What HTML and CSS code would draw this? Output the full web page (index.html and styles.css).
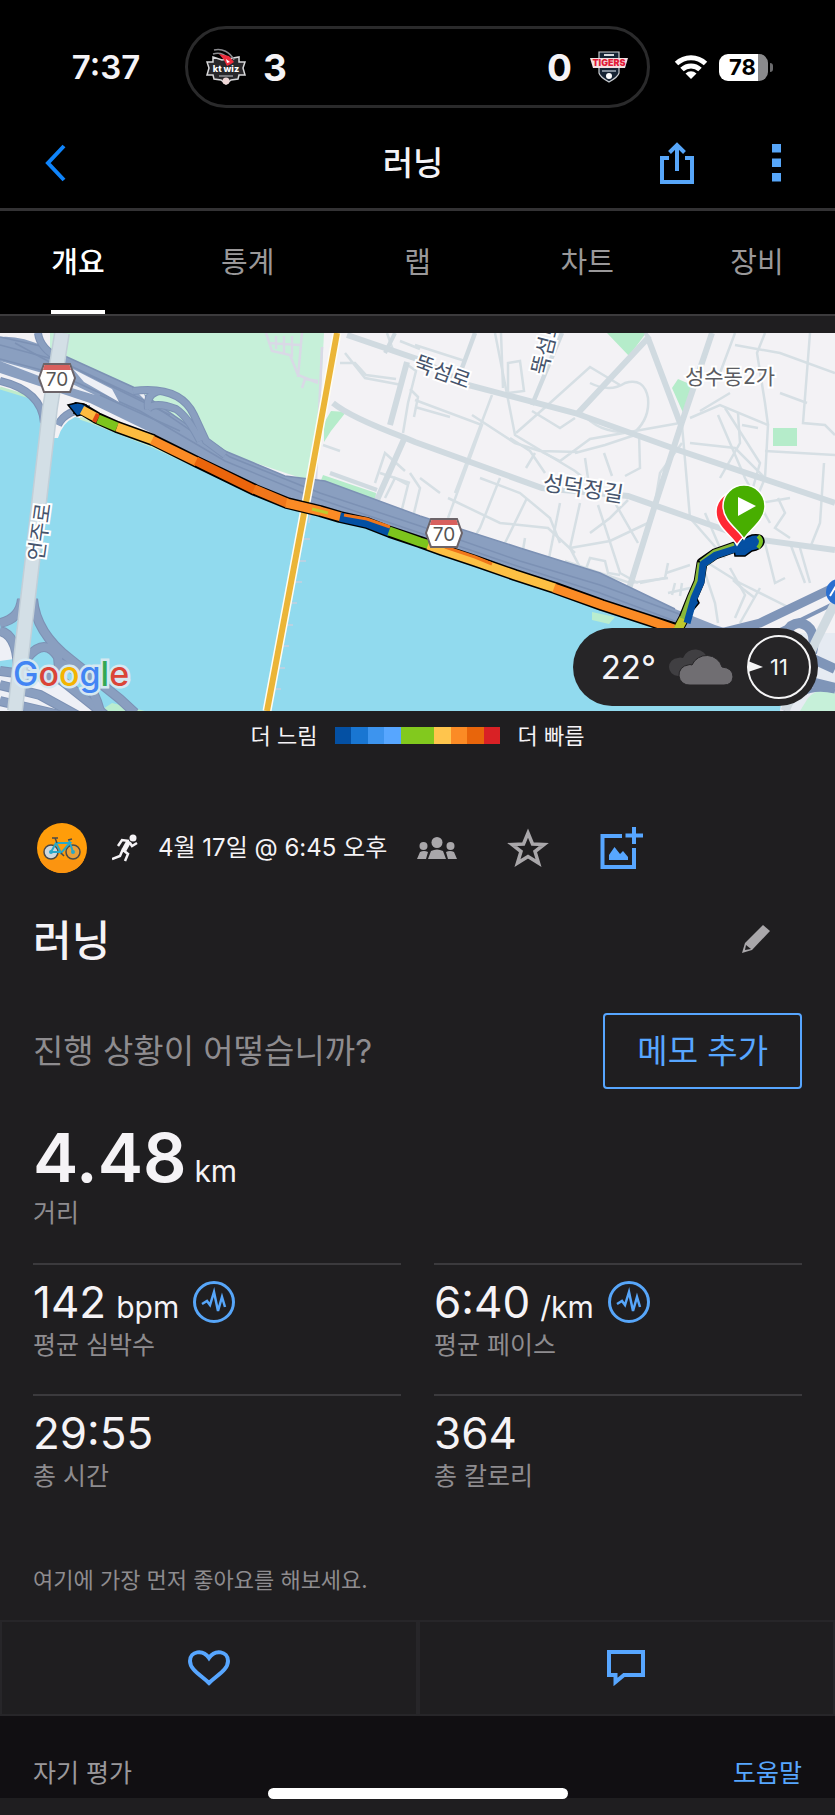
FILE: index.html
```
<!DOCTYPE html>
<html lang="ko">
<head>
  <meta charset="UTF-8">
  <meta name="viewport" content="width=device-width, initial-scale=1.0">
  <title>러닝</title>
  <link rel="stylesheet" href="styles.css">
</head>
<body>
  <header class="top">
    <div class="status">
      <span class="time">7:37</span>
      <div class="island">
        <svg class="team" viewBox="0 0 40 38" aria-hidden="true">
          <path d="M7 9 L16 12 L33 9 L33 14 L39 14 L37 20 L39 27 L33 27 L32 31 L25 32 L20 36 L15 32 L8 31 L7 27 L1 27 L3 20 L1 14 L7 14 Z" fill="#29282b" stroke="#d8d8da" stroke-width="1.5"/>
          <path d="M8 2 C16 0 24 4 28 12 M7 6 C13 4 18 6 22 10" fill="none" stroke="#8b8b8f" stroke-width="1.5"/>
          <path d="M13 6 L23 8 L28 14 L25 16 L21 18 L18 12 Z" fill="#ee2c3c"/>
          <path d="M20 11 l4 3 -3 1z" fill="#fff"/>
          <text x="20" y="24" text-anchor="middle" class="kt">kt wiz</text>
          <path d="M13 28 H27" stroke="#77777b" stroke-width="2"/>
          <circle cx="20" cy="33" r="3.5" fill="#f0d9d9"/>
        </svg>
        <strong>3</strong>
        <strong class="away">0</strong>
        <svg class="team" viewBox="0 0 40 38" aria-hidden="true">
          <path d="M10 4 H30 V25 Q29 29 20 34 Q11 29 10 25 Z" fill="#162434" stroke="#c9ccd0" stroke-width="1.2"/>
          <path d="M15 7 H25" stroke="#d8dbe0" stroke-width="2"/>
          <path d="M1 10 H39 L36 20 H4 Z" fill="#f3dfe2"/>
          <text x="20" y="18" text-anchor="middle" class="tigers">TIGERS</text>
          <path d="M13 23 H27" stroke="#7f8b98" stroke-width="2"/>
          <circle cx="20" cy="28" r="3" fill="#fff"/>
        </svg>
      </div>
      <div class="signals">
        <svg class="wifi" viewBox="0 0 34 26" aria-hidden="true">
          <g fill="none" stroke="#fff" stroke-width="5">
            <path d="M2.500 9.500 A21 21 0 0 1 31.500 9.500"/>
            <path d="M8 15.500 A13 13 0 0 1 26 15.500"/>
          </g>
          <path d="M17 25 L11.500 19.500 A8 8 0 0 1 22.500 19.500 Z" fill="#fff"/>
        </svg>
        <span class="battery">78</span>
      </div>
    </div>

    <div class="titlebar">
      <button class="icon-btn" aria-label="뒤로">
        <svg width="22" height="38" viewBox="0 0 22 38"><path d="M19 2 L3 19 L19 36" fill="none" stroke="#0f84fb" stroke-width="4"/></svg>
      </button>
      <h1>러닝</h1>
      <div class="title-actions">
        <button class="icon-btn" aria-label="공유">
          <svg width="34" height="42" viewBox="0 0 34 42"><path d="M9 16 H2 V40 H32 V16 H25 M17 29 V4 M9.500 10.500 L17 3 L24.500 10.500" fill="none" stroke="#57a6f9" stroke-width="4"/></svg>
        </button>
        <button class="icon-btn" aria-label="더보기">
          <svg width="9" height="38" viewBox="0 0 9 38"><path d="M0 0h9v8.500H0z M0 14.500h9V23H0z M0 29h9v8.500H0z" fill="#57a6f9"/></svg>
        </button>
      </div>
    </div>

    <nav class="tabs">
      <a href="#" class="active">개요</a>
      <a href="#">통계</a>
      <a href="#">랩</a>
      <a href="#">차트</a>
      <a href="#">장비</a>
    </nav>
  </header>

  <main>
    <section class="map">
      <svg class="map-canvas" viewBox="0 0 835 378" role="img" aria-label="러닝 경로 지도">
        <rect width="835" height="378" fill="#f3f2f5"/>

        <!-- parks -->
        <g fill="#b5ecca">
          <path d="M50 0 H324 Q320 80 316 150 L225 120 L50 40 Z" fill="#c6f0d9"/>
          <path d="M331 78 L346 79 L331 98 L324 109 V90 Z M323 142 L376 160 L375 171 L320 150 Z"/>
          <path d="M607 0 H646 L629 23 Z M678 46 L692 52 L684 82 L672 55 Z M773 95 H797 V113 H773 Z"/>
        </g>

        <!-- residential streets -->
        <g fill="none" stroke="#d6dfe4" stroke-width="2.500">
          <path d="M415 67 L482 92 L448 185 M492 62 L455 160 M495 0 L515 102 L575 138 L590 150"/>
          <path d="M415 12 L465 28 M387 0 L394 20 M400 8 L420 16 M345 20 L365 45 L402 52 M340 30 L355 30 L366 42 L396 46"/>
          <path d="M405 30 L416 38 L408 70 L403 100 M410 56 L418 64 L414 84 M323 112 L340 118 M375 150 L385 120 L405 138 M380 140 L410 150"/>
          <path d="M385 165 L395 145 L408 152 L402 176 M410 140 L420 155 L414 180 M420 145 L440 160"/>
          <path d="M415 74 L450 84 M472 82 L515 110 L540 118 L578 119 M540 118 L560 128 L590 106 L635 98 L680 90"/>
          <path d="M501 0 L503 55 M508 30 L520 28 L524 58 L508 60 Z M516 100 L550 70 L590 34 L620 52"/>
          <path d="M532 78 L560 95 L575 85 M582 80 Q600 102 635 99 Q650 85 648 65 Q644 44 625 50 Q610 60 590 50"/>
          <path d="M639 100 L640 135 L625 143 M575 120 L605 112 L635 102 M604 120 L612 143 M585 125 L588 145"/>
          <path d="M510 105 L530 118 L545 140 M526 135 L535 120 M480 145 L520 160 L550 185 L560 210"/>
          <path d="M448 165 L500 190 L548 195 L575 220 M500 145 L480 195 L462 225 M527 165 L505 210 L490 235"/>
          <path d="M560 170 L548 230 M580 170 L570 215 L583 240 M598 172 L620 240 L638 250 M615 170 L638 210"/>
          <path d="M628 167 L610 185 L590 200 M570 215 L610 208 L648 190 M525 205 L520 235 M565 228 L600 240 L630 250 L668 245"/>
          <path d="M586 236 L590 225 L605 228 L608 240 L620 242 M666 240 L690 232 M668 260 L690 255"/>
          <path d="M682 92 L690 185 L725 225 M690 110 L735 115 L765 145 M690 85 L720 72 L768 92 L765 145 L742 200"/>
          <path d="M718 82 L745 145 L770 190 M725 75 L760 130 L750 165 M765 0 L757 20 L765 70 L768 92 M700 78 L730 60"/>
          <path d="M742 92 L758 95 M738 80 L740 110 L720 145 M810 0 L803 90 L825 92 L835 102 M735 12 L780 20 L835 40"/>
          <path d="M735 0 L720 40 M780 60 L807 70 M765 118 L835 122 M760 170 L790 165 M778 165 L785 180 L775 195 L790 205"/>
          <path d="M824 130 L820 190 L810 215 M765 210 L775 250 L785 245 M800 215 L810 250 M790 210 L805 250"/>
          <path d="M705 180 L720 215 M700 225 L740 250 L790 275 M705 240 L715 270 L718 290 M730 235 L745 262 L735 285 M760 255 L740 290"/>
          <path d="M675 250 L672 262 M682 250 L680 263 M733 247 L743 256 L755 265 M655 170 L660 140 L682 110 M640 250 L665 245 L668 230"/>
        </g>
        <g fill="none" stroke="#d9d9e6" stroke-width="2.500">
          <path d="M266 0 L272 18 L290 22 L298 42 L318 50 M302 0 L298 44 M276 3 V16 M284 3 V20 M292 3 V24 M268 10 L300 12 M318 48 L305 46 L302 55"/>
          <path d="M322 14 L316 146 L322 150"/>
        </g>

        <!-- main streets -->
        <g fill="none" stroke="#d0dae0" stroke-width="6">
          <path d="M347 2 L420 27 L468 52 L575 80 L678 117 L835 170"/>
          <path d="M333 70 Q350 84 403 104 L415 109 L542 155 L628 163 L688 184 L748 205 L835 217"/>
          <path d="M712 0 L682 89 L655 172 L628 259"/>
          <path d="M648 5 L578 80 M648 5 L680 90 M405 104 L377 167 M390 92 L407 29"/>
          <path d="M475 0 L462 35 M562 0 L532 72 M330 140 L377 157" stroke-width="4.500"/>
          <path d="M395 0 L385 20 M645 0 L650 6" stroke-width="4"/>
        </g>

        <!-- river -->
        <path d="M0 55 L30 64 Q44 80 45 105 L58 105 Q62 90 75 84 L92 88 L150 111 L200 134 L262 163 L320 182 L372 195 L415 210 L520 248 L600 276 L680 302 L790 345 L785 378 H0 Z" fill="#91daee"/>
        <path d="M592 279 L615 284 L609 291 L592 287 Z" fill="#b9edcf"/>
        <path d="M0 55 L30 64 Q40 74 42 84" fill="none" stroke="#bfeccb" stroke-width="3"/>

        <!-- riverside expressway -->
        <path d="M0 4 Q20 2 45 14 L133 54 L225 118 L285 143 L325 148 L420 183 L520 215 L600 240 L675 276 L715 292 L770 310 L700 306 L620 276 L500 232 L400 197 L310 174 L250 152 L160 104 L90 70 L0 40 Z" fill="#8a9fc0"/>
        <g fill="none" stroke="#7c91b4" stroke-width="1.500">
          <path d="M0 12 L60 28 L150 70 L230 124 L320 160 L420 193 L520 228 L600 252 L690 285"/>
          <path d="M0 26 L60 42 L140 78 L225 128 L310 163 L420 200 L520 234 L600 260 L680 290"/>
          <path d="M0 4 L45 14 L133 54 L225 118 L285 143 L325 148 L420 183 L520 215 L600 240 L675 276"/>
          <path d="M15 10 L55 32 M80 38 L170 82 M100 62 L180 98"/>
        </g>
        <path d="M73 36 L112 56 L119 69 L84 49 Z M139 61 L144 60 L146 68 Z M0 28 L60 45 L95 62 L65 53 Z" fill="#eef0f6"/>
        <g fill="none" stroke="#7c91b4" stroke-width="8">
          <path d="M38 0 Q40 16 60 26 M133 58 Q180 52 194 82 L206 108 L225 122 M148 76 Q155 68 176 76 Q188 84 200 108 M0 48 Q42 58 44 90"/>
          <path d="M148 76 Q146 60 160 58 M58 92 Q66 76 90 76"/>
        </g>
        <g fill="none" stroke="#8a9fc0" stroke-width="6">
          <path d="M38 0 Q40 16 60 26 M133 58 Q180 52 194 82 L206 108 L225 122 M148 76 Q155 68 176 76 Q188 84 200 108 M0 48 Q42 58 44 90"/>
          <path d="M148 76 Q146 60 160 58 M58 92 Q66 76 90 76"/>
        </g>
        <path d="M80 85 L92 89 L150 112 L200 135" fill="none" stroke="#c6edce" stroke-width="3"/>

        <!-- south bank interchange -->
        <path d="M0 303 Q16 300 14 326 L0 328 Z M30 335 L55 350 L110 378 H0 V340 Z" fill="#eef0f6"/>
        <path d="M112 370 L145 378 H100 Z" fill="#b9edcf"/>
        <g fill="none" stroke="#7c91b4" stroke-width="10">
          <path d="M0 290 Q20 286 22 266 M33 266 Q36 300 70 326 L120 366 L135 380 M0 298 Q18 302 18 340 M0 352 L40 362 L80 384 M0 338 L60 346 L105 382 M28 324 Q45 304 58 324 L60 346"/>
          <path d="M60 330 Q90 340 100 378 M0 368 L60 382"/>
        </g>
        <g fill="none" stroke="#8a9fc0" stroke-width="8">
          <path d="M0 290 Q20 286 22 266 M33 266 Q36 300 70 326 L120 366 L135 380 M0 298 Q18 302 18 340 M0 352 L40 362 L80 384 M0 338 L60 346 L105 382 M28 324 Q45 304 58 324 L60 346"/>
          <path d="M60 330 Q90 340 100 378 M0 368 L60 382"/>
        </g>

        <!-- east interchange -->
        <path d="M790 300 H835 V378 H780 Z" fill="#e6ebf2"/>
        <path d="M808 365 Q820 352 835 360 V378 H800 Z" fill="#c6f0d9"/>
        <g fill="none" stroke="#7f95b8">
          <path d="M835 254 L760 290 L720 300" stroke-width="9"/>
          <path d="M835 270 L770 302" stroke-width="4"/>
          <path d="M790 320 Q780 292 800 290 Q818 294 812 320 M800 320 L835 336 M795 345 L835 355" stroke-width="10"/>
          <path d="M785 378 Q800 350 835 358" stroke-width="5"/>
        </g>
        <path d="M835 270 L815 310 L785 378" fill="none" stroke="#d0dae0" stroke-width="9"/>
        <circle cx="839" cy="259" r="13" fill="#2a6fd0"/>
        <path d="M830 263 L836 253" stroke="#fff" stroke-width="2"/>

        <!-- bridges -->
        <path d="M62 0 L50 75 L28 265 L15 378" fill="none" stroke="#c2cfd8" stroke-width="16"/>
        <path d="M62 0 L50 75 L28 265 L15 378" fill="none" stroke="#d3dfe6" stroke-width="13"/>
        <g stroke="#c5cfe0" stroke-width="1.500">
          <path d="M303 206h7 M299 228h7 M295 249h7 M291 270h6 M287 292h6 M283 313h6 M279 335h6 M275 356h6 M312 170 L309 190"/>
        </g>
        <path d="M337 0 L308 159 L267 378" fill="none" stroke="#fffdf2" stroke-width="9"/>
        <path d="M337 0 L308 159 L267 378" fill="none" stroke="#ebb537" stroke-width="6"/>

        <!-- track outline -->
        <g fill="none" stroke="#000" stroke-width="12" stroke-linejoin="round">
          <path d="M74 75 L82 76 L97 85 L117 94 L153 107 L197 129 L255 157 L287 170 L320 178 L340 184 L367 190 L390 199 L420 209 L442 217 L475 228 L515 242 L555 255 L602 272 L648 287 L676 296"/>
          <path d="M676 300 L684 285 L692 265 L699 249 L702 230 L715 221 L735 214 L758 209" stroke-width="11"/>
        </g>
        <path d="M68 72 L76 70 L86 72 L88 80 L77 83 Z" fill="#0450a3" stroke="#000" stroke-width="1.500"/>
        <path d="M733 210 L752 202 Q764 200 764 209 Q762 217 752 218 L745 223 L735 223 Z" fill="#0450a3" stroke="#000" stroke-width="1.500"/>
        <path d="M688 274 L697 266 L699 270 L694 276 Z" fill="#0450a3" stroke="#000" stroke-width="1.500"/>

        <!-- track coloured by pace -->
        <g fill="none" stroke-width="9" stroke-linejoin="round">
          <path d="M76 75 L82 76" stroke="#0450a3"/>
          <path d="M82 77 L97 85" stroke="#fdbb40"/>
          <path d="M94 84 L98 86" stroke="#e04a12"/>
          <path d="M98 86 L117 94" stroke="#7dc41d"/>
          <path d="M117 94 L153 107" stroke="#fdbb40"/>
          <path d="M152 107 L197 129" stroke="#fb8b25"/>
          <path d="M196 128 L255 157" stroke="#eb650c"/>
          <path d="M254 156 L287 170" stroke="#f0761a"/>
          <path d="M286 170 L320 178 L341 184" stroke="#fb8b25"/>
          <path d="M340 184 L367 190 L390 199" stroke="#0450a3"/>
          <path d="M389 198 L420 209 L430 212" stroke="#7dc41d"/>
          <path d="M428 212 L442 217 L475 228 L515 242 L555 255" stroke="#fdc043"/>
          <path d="M554 255 L602 272 L648 287 L674 296" stroke="#fb8b25"/>
          <path d="M676 300 L684 285" stroke="#bfc92c"/>
          <path d="M684 286 L692 265 L699 249 L702 230" stroke="#88b83a"/>
          <path d="M702 231 L715 221 L735 214" stroke="#88b83a"/>
          <path d="M687 290 L694 265 L701 249 L703 231 L716 222 L735 216 L754 210" stroke="#0450a3" stroke-width="7"/>
        </g>
        <g fill="none" stroke-width="3">
          <path d="M344 182 L367 186 L390 194 M445 214 L475 224 L492 231" stroke="#f0761a"/>
          <path d="M312 176 L328 180" stroke="#bfc92c"/>
          <path d="M758 203 Q764 208 758 215" stroke="#7dc41d" stroke-width="4"/>
        </g>

        <!-- start and finish pins -->
        <path d="M737 212 C731 202 716 194 716 179 A21 21 0 0 1 758 179 C758 194 743 202 737 212 Z" fill="#ff2834" stroke="#fff" stroke-width="1.500"/>
        <path d="M744 206 C738 196 723 188 723 173 A21 21 0 0 1 765 173 C765 188 750 196 744 206 Z" fill="#48ae00" stroke="#fff" stroke-width="1.500"/>
        <path d="M738 164 L756 173 L738 183 Z" fill="#fff"/>

        <!-- route shields -->
        <g stroke="#6c6469" stroke-width="2">
          <path d="M44 31 H70 L75 45 L70 59 H44 L39 45 Z M431 186 H457 L462 200 L457 214 H431 L426 200 Z" fill="#fff"/>
        </g>
        <path d="M44.500 32 H69.500 L71 37 H43 Z M431.500 187 H456.500 L458 192 H430 Z" fill="#d8605e"/>

        <g class="map-labels">
          <text x="57" y="53" class="shield">70</text>
          <text x="444" y="208" class="shield">70</text>
          <text transform="translate(440 46) rotate(20)">뚝섬로</text>
          <text transform="translate(553 15) rotate(-76)">뚝섬로</text>
          <text x="730" y="51" class="district">성수동2가</text>
          <text transform="translate(582 163) rotate(9)" class="street">성덕정길</text>
          <text transform="translate(47 200) rotate(-82)">언주로</text>
        </g>
        <text x="13" y="353" class="google"><tspan fill="#4285f4">G</tspan><tspan fill="#db4437">o</tspan><tspan fill="#f4b400">o</tspan><tspan fill="#4285f4">g</tspan><tspan fill="#34a853">l</tspan><tspan fill="#db4437">e</tspan></text>
      </svg>
      <div class="weather">
        <span class="temp">22°</span>
        <svg width="66" height="38" viewBox="0 0 66 38" aria-hidden="true">
          <path d="M10 28 A9 9 0 0 1 10 10 Q12 9 15 10 A13 13 0 0 1 40 12 L20 28 Z" fill="#403f42"/>
          <path d="M22 37 A10 10 0 0 1 20 17 Q22 16 24 17 A16 16 0 0 1 54 19 Q65 20 65 29 Q64 37 56 37 Z" fill="#706e72" stroke="#262527"/>
        </svg>
        <svg class="wind" width="66" height="66" viewBox="0 0 66 66" role="img" aria-label="바람 11">
          <circle cx="33" cy="33" r="31" fill="none" stroke="#f5f5f6" stroke-width="2"/>
          <path d="M2 27 L17 33 L2 38 Z" fill="#f5f5f6"/>
          <text x="33" y="41" text-anchor="middle">11</text>
        </svg>
      </div>
    </section>

    <div class="legend">
      <span>더 느림</span>
      <div class="scale">
        <i class="s1"></i><i class="s2"></i><i class="s3"></i><i class="s4"></i><i class="s5"></i>
        <i class="s5"></i><i class="s6"></i><i class="s7"></i><i class="s8"></i><i class="s9"></i>
      </div>
      <span>더 빠름</span>
    </div>

    <section class="activity">
      <div class="meta">
        <svg class="avatar" width="50" height="50" viewBox="0 0 50 50" aria-hidden="true">
          <circle cx="25" cy="25" r="25" fill="#ff9d0a"/>
          <path d="M3 37 A25 25 0 0 0 47 37 Z" fill="#fb9410"/>
          <circle cx="14" cy="29" r="7" fill="#cfd8dc" stroke="#4b4a48" stroke-width="1.500"/>
          <circle cx="36" cy="29" r="7" fill="#e9a13a" stroke="#4b4a48" stroke-width="1.500"/>
          <path d="M14 29 L19 20 H33 L24 30 L19 20 M32 17 L36 29 M14 29 H24" fill="none" stroke="#29a8c8" stroke-width="2"/>
          <path d="M15 15 H21 M18 15 L20 20 M31 17 L35 16 M24 30 L27 33" stroke="#4b4a48" stroke-width="1.500"/>
          <circle cx="14" cy="29" r="2" fill="#29a8c8"/><circle cx="36" cy="29" r="2" fill="#29a8c8"/>
        </svg>
        <svg class="runner" width="26" height="28" viewBox="0 0 26 28" aria-hidden="true">
          <circle cx="21" cy="4" r="3.500" fill="#f5f3f6"/>
          <path d="M17 7 L12 16" stroke="#f5f3f6" stroke-width="5"/>
          <path d="M17 7 L10 6 L6 12 M18 9 L20 12 L25 9 M11 16 L16 20 L13 27 M11 15 L8 22 L0 25" fill="none" stroke="#f5f3f6" stroke-width="2.500"/>
        </svg>
        <time>4월 17일 @ 6:45 오후</time>
        <svg class="people" width="40" height="22" viewBox="0 0 40 22" aria-hidden="true">
          <g fill="#a9a7aa"><circle cx="20" cy="5.500" r="5.500"/><circle cx="6.500" cy="9" r="4"/><circle cx="33.500" cy="9" r="4"/>
          <path d="M11 22 L14 14 Q20 11 26 14 L29 22 Z M0 22 L3 15 Q7 13 11 15 L9 22 Z M40 22 L37 15 Q33 13 29 15 L31 22 Z"/></g>
        </svg>
        <button class="icon-btn" aria-label="즐겨찾기">
          <svg width="42" height="40" viewBox="0 0 42 40"><path d="M21 5 L25.500 16 L37 16.500 L28 23.500 L31.500 35 L21 28.500 L10.500 35 L14 23.500 L5 16.500 L16.500 16 Z" fill="none" stroke="#a9a7aa" stroke-width="3.500"/></svg>
        </button>
        <button class="icon-btn photo" aria-label="사진 추가">
          <svg width="43" height="43" viewBox="0 0 43 43"><path d="M22 9 H2.500 V40 H34 V21 M25.500 8.500 H43 M34 0 V17" fill="none" stroke="#57a6ff" stroke-width="4"/><path d="M9 33 V28 L14.500 20 L20 27 L23 24 L28 30 V33 Z" fill="#57a6ff"/></svg>
        </button>
      </div>

      <div class="row title-row">
        <h2>러닝</h2>
        <button class="icon-btn" aria-label="이름 수정">
          <svg width="28" height="28" viewBox="0 0 28 28"><path d="M0 28 L3 18 L21 0 L28 6 L10 25 Z" fill="#a9a7aa"/><path d="M4 20 L9 24 L3 25 Z" fill="#1f1e20"/></svg>
        </button>
      </div>

      <div class="row note-row">
        <p>진행 상황이 어떻습니까?</p>
        <button class="note-btn">메모 추가</button>
      </div>

      <div class="distance">
        <p><strong>4.48</strong> <span>km</span></p>
        <small>거리</small>
      </div>

      <div class="stats">
        <div class="stat">
          <p>142 <span>bpm</span>
            <svg width="42" height="42" viewBox="0 0 42 42" aria-hidden="true"><g fill="none" stroke="#57a6f9"><circle cx="21" cy="21" r="19.500" stroke-width="3"/><path d="M9 23 L14 20 L17 24 L21 11 L25 30 L29 16 L32 26" stroke-width="2.500"/></g></svg>
          </p>
          <small>평균 심박수</small>
        </div>
        <div class="stat">
          <p>6:40 <span>/km</span>
            <svg width="42" height="42" viewBox="0 0 42 42" aria-hidden="true"><g fill="none" stroke="#57a6f9"><circle cx="21" cy="21" r="19.500" stroke-width="3"/><path d="M9 23 L14 20 L17 24 L21 11 L25 30 L29 16 L32 26" stroke-width="2.500"/></g></svg>
          </p>
          <small>평균 페이스</small>
        </div>
        <div class="stat">
          <p>29:55</p>
          <small>총 시간</small>
        </div>
        <div class="stat">
          <p>364</p>
          <small>총 칼로리</small>
        </div>
      </div>

      <p class="first-like">여기에 가장 먼저 좋아요를 해보세요.</p>
    </section>

    <div class="social">
      <button aria-label="좋아요">
        <svg width="42" height="36" viewBox="0 0 42 36"><path d="M21 33 C13 25 2 20 2 11 C2 1 15 -1 21 8 C27 -1 40 1 40 11 C40 20 29 25 21 33 Z" fill="none" stroke="#57a6ff" stroke-width="4"/></svg>
      </button>
      <button aria-label="댓글">
        <svg width="38" height="36" viewBox="0 0 38 36"><path d="M2 2 H36 V25 H17 L8.500 32 V25 H2 Z" fill="none" stroke="#57a6ff" stroke-width="4"/></svg>
      </button>
    </div>

    <section class="self-eval">
      <h3>자기 평가</h3>
      <a href="#">도움말</a>
    </section>
  </main>
  <div class="home-bar"></div>
</body>
</html>
```
FILE: styles.css
```
* {
  box-sizing: border-box;
}

body {
  margin: 0;
  font-family: Inter, "Noto Sans CJK KR", sans-serif;
  background: #1f1e20;
  color: #f5f3f6;
}

h1, h2, h3, p {
  margin: 0;
}

svg {
  display: block;
  flex-shrink: 0;
}

a {
  text-decoration: none;
}

button {
  font-family: inherit;
  cursor: pointer;
}

.icon-btn {
  padding: 0;
  border: none;
  background: none;
}

/* header */
.top {
  background: #000;
}

.status {
  display: grid;
  grid-template-columns: 185px 1fr 185px;
  align-items: center;
  padding-top: 26px;
}

.time {
  padding-left: 27px;
  text-align: center;
  font-size: 33px;
  font-weight: 600;
}

.island {
  display: flex;
  align-items: center;
  gap: 17px;
  height: 82px;
  padding: 0 18px;
  border: 3px solid #2a2a2b;
  border-radius: 41px;
}

.island strong {
  font-size: 37px;
  font-weight: 700;
}

.island .away {
  margin-left: auto;
}

.team {
  width: 40px;
  height: 38px;
}

.kt {
  font-size: 9px;
  font-weight: 800;
  fill: #fff;
}

.tigers {
  font-size: 9px;
  font-weight: 900;
  fill: #e21c38;
}

.signals {
  display: flex;
  align-items: center;
  gap: 11px;
  padding-left: 24px;
}

.wifi {
  width: 34px;
  height: 26px;
}

.battery {
  position: relative;
  width: 49px;
  height: 27px;
  padding-right: 2px;
  border-radius: 9px;
  background: linear-gradient(90deg, #fff 79%, #8a8a8c 79%);
  color: #000;
  font-size: 22px;
  font-weight: 700;
  line-height: 27px;
  text-align: center;
}

.battery::after {
  content: "";
  position: absolute;
  left: 51px;
  top: 9px;
  width: 3px;
  height: 9px;
  border-radius: 0 4px 4px 0;
  background: #6b6b6d;
}

.titlebar {
  display: grid;
  grid-template-columns: 1fr auto 1fr;
  align-items: center;
  height: 103px;
  padding: 10px 54px 0 45px;
  border-bottom: 3px solid #333234;
}

.titlebar h1 {
  font-size: 33px;
  font-weight: 500;
  line-height: 40px;
}

.title-actions {
  display: flex;
  align-items: center;
  justify-content: flex-end;
  gap: 78px;
}

.tabs {
  display: flex;
  justify-content: space-between;
  padding: 0 51px;
  border-bottom: 2px solid #3c3b3d;
}

.tabs a {
  min-width: 54px;
  height: 103px;
  border-bottom: 4px solid transparent;
  color: #9a9899;
  font-size: 29px;
  line-height: 104px;
  text-align: center;
}

.tabs .active {
  border-color: #fff;
  color: #fff;
  font-weight: 500;
}

/* map */
.map {
  position: relative;
  margin-top: 17px;
}

.map-canvas {
  width: 100%;
  height: auto;
}

.map-labels text {
  font-size: 21px;
  fill: #46546c;
  stroke: #fff;
  stroke-width: 4px;
  paint-order: stroke;
  text-anchor: middle;
}

.map-labels .shield {
  fill: #555;
  font-size: 19px;
}

.map-labels .district {
  fill: #5b5c61;
}

.map-labels .street {
  font-size: 22px;
}

.google {
  font-size: 34px;
  font-weight: 500;
  stroke: #d5e8f1;
  stroke-width: 5px;
  paint-order: stroke;
}

.weather {
  position: absolute;
  right: 17px;
  bottom: 5px;
  display: flex;
  align-items: center;
  gap: 12px;
  height: 78px;
  padding: 0 6px 0 28px;
  border-radius: 39px;
  background: #262527;
}

.temp {
  font-size: 33px;
}

.wind text {
  fill: #f5f5f6;
  font-size: 22px;
}

.legend {
  display: flex;
  align-items: center;
  justify-content: center;
  gap: 17px;
  height: 48px;
  font-size: 22px;
}

.legend span {
  padding-bottom: 2px;
}

.scale {
  display: flex;
  width: 166px;
  height: 17px;
}

.scale i {
  flex: 1;
}

.s1 { background: #0450a3; }
.s2 { background: #1976d2; }
.s3 { background: #3d94ee; }
.s4 { background: #57a6ff; }
.s5 { background: #82c91e; }
.s6 { background: #ffc54d; }
.s7 { background: #fb8b25; }
.s8 { background: #e8650b; }
.s9 { background: #d92125; }

/* activity */
.activity {
  padding: 64px 33px 0;
}

.meta {
  display: flex;
  align-items: center;
  height: 50px;
  padding-left: 4px;
}

.runner {
  margin: 0 20px 0 25px;
}

.meta time {
  font-size: 24px;
  line-height: 32px;
}

.people {
  margin: 0 50px 0 30px;
}

.photo {
  margin-left: 51px;
}

.row {
  display: flex;
  align-items: center;
  justify-content: space-between;
}

.title-row {
  height: 60px;
  margin-top: 36px;
  padding-right: 32px;
}

.title-row h2 {
  padding-bottom: 4px;
  font-size: 42px;
  font-weight: 500;
}

.note-row {
  margin-top: 44px;
}

.note-row p {
  padding-bottom: 4px;
  color: #8e8c8f;
  font-size: 33px;
}

.note-btn {
  height: 76px;
  padding: 0 32px 4px;
  border: 2px solid #57a6ff;
  border-radius: 4px;
  background: none;
  color: #57a6ff;
  font-size: 33px;
}

.distance {
  margin-top: 32px;
}

.distance p {
  height: 76px;
  line-height: 72px;
  font-size: 28px;
}

.distance strong {
  font-size: 68px;
  font-weight: 600;
}

.distance small, .stat small {
  display: block;
  color: #8e8c8f;
  font-size: 25px;
  line-height: 32px;
}

.distance span, .stat span {
  font-size: 30px;
}

.stats {
  display: grid;
  grid-template-columns: 1fr 1fr;
  column-gap: 33px;
  margin-top: 34px;
}

.stat {
  height: 131px;
  padding-top: 10px;
  border-top: 2px solid #3b3a3d;
}

.stat p {
  display: flex;
  align-items: baseline;
  gap: 10px;
  height: 54px;
  font-size: 44px;
  line-height: 54px;
}

.stat svg {
  align-self: center;
  margin-left: 4px;
}

.first-like {
  margin-top: 40px;
  color: #8e8c8f;
  font-size: 22px;
  line-height: 30px;
}

.social {
  display: grid;
  grid-template-columns: 1fr 1fr;
  margin-top: 25px;
}

.social button {
  display: flex;
  align-items: center;
  justify-content: center;
  height: 96px;
  border: 2px solid #272629;
  background: none;
}

.self-eval {
  display: flex;
  align-items: flex-end;
  justify-content: space-between;
  height: 82px;
  padding: 0 33px 9px;
  background: #110f12;
  font-size: 25px;
  line-height: 32px;
}

.self-eval h3 {
  color: #9a989b;
  font-size: 25px;
  font-weight: 400;
}

.self-eval a {
  color: #57a6ff;
}

.home-bar {
  position: fixed;
  bottom: 16px;
  left: 50%;
  width: 300px;
  height: 11px;
  margin-left: -150px;
  border-radius: 6px;
  background: #fff;
}
```
